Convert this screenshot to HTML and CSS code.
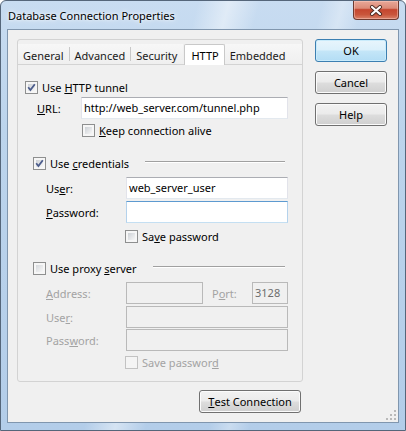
FILE: index.html
```html
<!DOCTYPE html>
<html>
<head>
<meta charset="utf-8">
<link rel="stylesheet" href="styles.css">
</head>
<body>
<div class="window">
  <div class="titlebar">
    <span class="title">Database Connection Properties</span>
    <div class="close">
      <svg width="14" height="11" viewBox="0 0 14 11"><path d="M3 2 L11 9 M11 2 L3 9" stroke="#4a2a22" stroke-width="4" stroke-linecap="round" fill="none"/><path d="M3 2 L11 9 M11 2 L3 9" stroke="#ffffff" stroke-width="2.2" stroke-linecap="round" fill="none"/></svg>
    </div>
  </div>
  <div class="client">
    <div class="main">
      <div class="tabcol">
        <div class="tabbox">
          <div class="tabstrip">
            <div class="tab sep">General</div>
            <div class="tab sep">Advanced</div>
            <div class="tab">Security</div>
            <div class="tab active">HTTP</div>
            <div class="tab">Embedded</div>
            <div class="tabfill"></div>
          </div>
          <div class="panel">
            <div class="row cbrow r1"><span class="cb checked"><svg width="11" height="11" viewBox="0 0 11 11"><path d="M2.2 5.3 L4.4 8 L8.8 2.2" stroke="#4c5d8c" stroke-width="1.8" fill="none"/></svg></span><span class="cbtext">Use <u>H</u>TTP tunnel</span></div>
            <div class="row field url"><span class="lbl lbl-url"><u>U</u>RL:</span><div class="input">http://web_server.com/tunnel.php</div></div>
            <div class="row cbrow keep"><span class="cb"></span><span class="cbtext"><u>K</u>eep connection alive</span></div>

            <div class="row cbrow group cred"><span class="cb checked"><svg width="11" height="11" viewBox="0 0 11 11"><path d="M2.2 5.3 L4.4 8 L8.8 2.2" stroke="#4c5d8c" stroke-width="1.8" fill="none"/></svg></span><span class="cbtext">Use <u>c</u>redentials</span><span class="line"></span></div>
            <div class="row field sub user"><span class="lbl">Us<u>e</u>r:</span><div class="input">web_server_user</div></div>
            <div class="row field sub pw"><span class="lbl"><u>P</u>assword:</span><div class="input focus"></div></div>
            <div class="row cbrow save"><span class="cb"></span><span class="cbtext">Sa<u>v</u>e password</span></div>

            <div class="row cbrow group proxy"><span class="cb"></span><span class="cbtext">Use proxy <u>s</u>erver</span><span class="line"></span></div>
            <div class="row field sub dis addr"><span class="lbl"><u>A</u>ddress:</span><div class="input addrin"></div><span class="lbl port">P<u>o</u>rt:</span><div class="input portin">3128</div></div>
            <div class="row field sub dis puser"><span class="lbl">Use<u>r</u>:</span><div class="input"></div></div>
            <div class="row field sub dis ppw"><span class="lbl">Pass<u>w</u>ord:</span><div class="input"></div></div>
            <div class="row cbrow dis psave"><span class="cb"></span><span class="cbtext">Save passwor<u>d</u></span></div>
          </div>
        </div>
        <div class="footer">
          <div class="btn test"><u>T</u>est Connection</div>
        </div>
      </div>
      <div class="sidebtns">
        <div class="btn ok">OK</div>
        <div class="btn">Cancel</div>
        <div class="btn">Help</div>
      </div>
    </div>
    <div class="grip">
      <svg width="10" height="10" viewBox="0 0 10 10" fill="#b9b9b9"><rect x="8" y="0" width="2" height="2"/><rect x="4" y="4" width="2" height="2"/><rect x="8" y="4" width="2" height="2"/><rect x="0" y="8" width="2" height="2"/><rect x="4" y="8" width="2" height="2"/><rect x="8" y="8" width="2" height="2"/></svg>
    </div>
  </div>
</div>
</body>
</html>
```

FILE: styles.css
```css
* { box-sizing: border-box; }
html, body { margin: 0; padding: 0; }
body {
  width: 406px;
  height: 431px;
  overflow: hidden;
  background: #ffffff;
  font-family: "Noto Sans", "Open Sans", sans-serif;
  font-size: 11px;
  color: #000;
}
u { text-decoration: underline; text-underline-offset: 1px; text-decoration-thickness: 1px; }

.window {
  width: 406px;
  height: 431px;
  border: 1px solid #55667a;
  border-radius: 6px 6px 0 0;
  background:
    linear-gradient(105deg, rgba(255,255,255,0) 38%, rgba(255,255,255,0.45) 44%, rgba(255,255,255,0) 50%, rgba(255,255,255,0) 62%, rgba(255,255,255,0.3) 66%, rgba(255,255,255,0) 70%),
    linear-gradient(#c8dcf1, #bcd4ec 30%, #b3cde9 100%);
  display: flex;
  flex-direction: column;
  padding: 0 6px 7px 6px;
}

.titlebar {
  height: 28px;
  display: flex;
  justify-content: space-between;
  align-items: flex-start;
  flex: none;
}
.title {
  margin-top: 7px;
  margin-left: 1px;
  line-height: 15px;
  color: #000;
  text-shadow: 0 0 6px rgba(255,255,255,0.95), 0 0 3px rgba(255,255,255,0.9);
}
.close {
  width: 46px;
  height: 19px;
  border: 1px solid #6d3a30;
  border-top: none;
  border-radius: 0 0 4px 4px;
  background: linear-gradient(#e8a898 0%, #dc8b78 40%, #c5462f 48%, #c9553b 75%, #d9826a 100%);
  box-shadow: inset 0 0 0 1px rgba(255,210,200,0.45);
  display: flex;
  align-items: center;
  justify-content: center;
}

.client {
  flex: 1;
  border: 1px solid #8096ae;
  background: #f0f0f0;
  display: flex;
  flex-direction: column;
  position: relative;
}
.main {
  display: flex;
  flex: 1;
}
.tabcol {
  margin-left: 9px;
  margin-top: 9px;
  width: 286px;
  display: flex;
  flex-direction: column;
}
.tabbox {
  height: 343px;
  border: 1px solid #d3d3d3;
  border-radius: 3px;
  display: flex;
  flex-direction: column;
  background: #f0f0f0;
}
.tabstrip {
  height: 24px;
  display: flex;
  align-items: flex-end;
  flex: none;
  position: relative;
  z-index: 1;
}
.tab {
  height: 20px;
  padding: 4px 6px 0 5px;
  line-height: 15px;
  color: #1a1a1a;
  white-space: nowrap;
  background: linear-gradient(#f7f7f7, #efefef);
}
.tabfill {
  flex: 1;
  height: 20px;
  background: linear-gradient(#f7f7f7, #efefef);
}
.tab.sep { position: relative; }
.tab.sep::after {
  content: "";
  position: absolute;
  right: 0;
  top: 3px;
  width: 1px;
  height: 14px;
  background: #c8c8c8;
}
.tab.active {
  height: 21px;
  padding: 3px 5px 0 6px;
  margin-left: 1px;
  margin-bottom: -1px;
  background: #ffffff;
  border: 1px solid #c9c9c9;
  border-bottom: none;
  border-radius: 2px 2px 0 0;
  color: #000;
}
.panel {
  flex: 1;
  border-top: 1px solid #d3d3d3;
  display: flex;
  flex-direction: column;
  padding-right: 14px;
}

.row { display: flex; align-items: center; }
.cbrow { height: 15px; line-height: 15px; }
.field { height: 22px; line-height: 15px; }
.cb {
  flex: none;
  width: 13px;
  height: 13px;
  border: 1px solid #8e8f8f;
  padding: 2px;
  background: linear-gradient(135deg, #cdd1d6, #f7f7f7) content-box, #f6f6f6;
  position: relative;
}
.cb svg { position: absolute; left: 0; top: 0; }
.cbtext { margin-left: 4px; white-space: nowrap; }
.line {
  flex: 1;
  align-self: flex-start;
  margin-top: 5px;
  height: 1px;
  background: #a0a0a0;
  box-shadow: 0 1px 0 #ffffff;
  margin-left: 16px;
  margin-right: 3px;
}
.lbl { flex: none; width: 80px; white-space: nowrap; }
.lbl-url { width: 44px; }
.input {
  flex: 1;
  height: 22px;
  background: #ffffff;
  border: 1px solid;
  border-color: #abadb3 #e2e3ea #e3e9ef #e2e3ea;
  padding: 2px 2px 0 2px;
  line-height: 15px;
  white-space: nowrap;
  overflow: hidden;
}
.input.focus { border-color: #5d9ad0 #b4d2ec #c4dff2 #b4d2ec; }

.r1 { margin-top: 15px; padding-left: 7px; }
.url { margin-top: 2px; padding-left: 19px; }
.keep { margin-top: 4px; padding-left: 64px; }
.cred { margin-top: 18px; padding-left: 15px; }
.sub { padding-left: 28px; }
.user { margin-top: 6px; }
.pw { margin-top: 2px; }
.save { margin-top: 6px; padding-left: 107px; }
.proxy { margin-top: 17px; padding-left: 15px; }
.addr { margin-top: 6px; }
.puser { margin-top: 2px; }
.ppw { margin-top: 1px; }
.psave { margin-top: 4px; padding-left: 107px; }

.dis .lbl, .dis .cbtext { color: #a3a3a3; }
.dis .input { background: #f0f0f0; border: 1px solid #b9b9b9; color: #6d6d6d; }
.dis .cb { border-color: #c2c2c2; background: #f4f4f4; }
.proxy .cb { background: linear-gradient(135deg, #d6d9dd, #f7f7f7) content-box, #f6f6f6; }
.addrin { flex: none; width: 77px; }
.lbl.port { width: 40px; margin-left: 9px; }
.portin { flex: none; width: 36px; padding-left: 2px; }

.footer {
  display: flex;
  justify-content: flex-end;
  margin-top: 8px;
  padding-right: 2px;
}
.btn {
  height: 23px;
  width: 72px;
  border: 1px solid #707070;
  border-radius: 3px;
  background: linear-gradient(#f2f2f2 0%, #ebebeb 48%, #dddddd 52%, #cfcfcf 100%);
  box-shadow: inset 0 0 0 1px #fbfbfb;
  display: flex;
  align-items: center;
  justify-content: center;
  line-height: 15px;
  white-space: nowrap;
}
.btn.test { width: 102px; }
.btn.ok {
  border-color: #3c7fb1;
  background: linear-gradient(#e8f5fc 0%, #dbf0fb 48%, #c4e6f8 52%, #b3ddf5 100%);
  box-shadow: inset 0 0 0 1px #c9ebfb;
}
.sidebtns {
  margin-left: 12px;
  margin-top: 9px;
  display: flex;
  flex-direction: column;
  gap: 9px;
}
.grip {
  position: absolute;
  right: 2px;
  bottom: 2px;
  line-height: 0;
}
```
